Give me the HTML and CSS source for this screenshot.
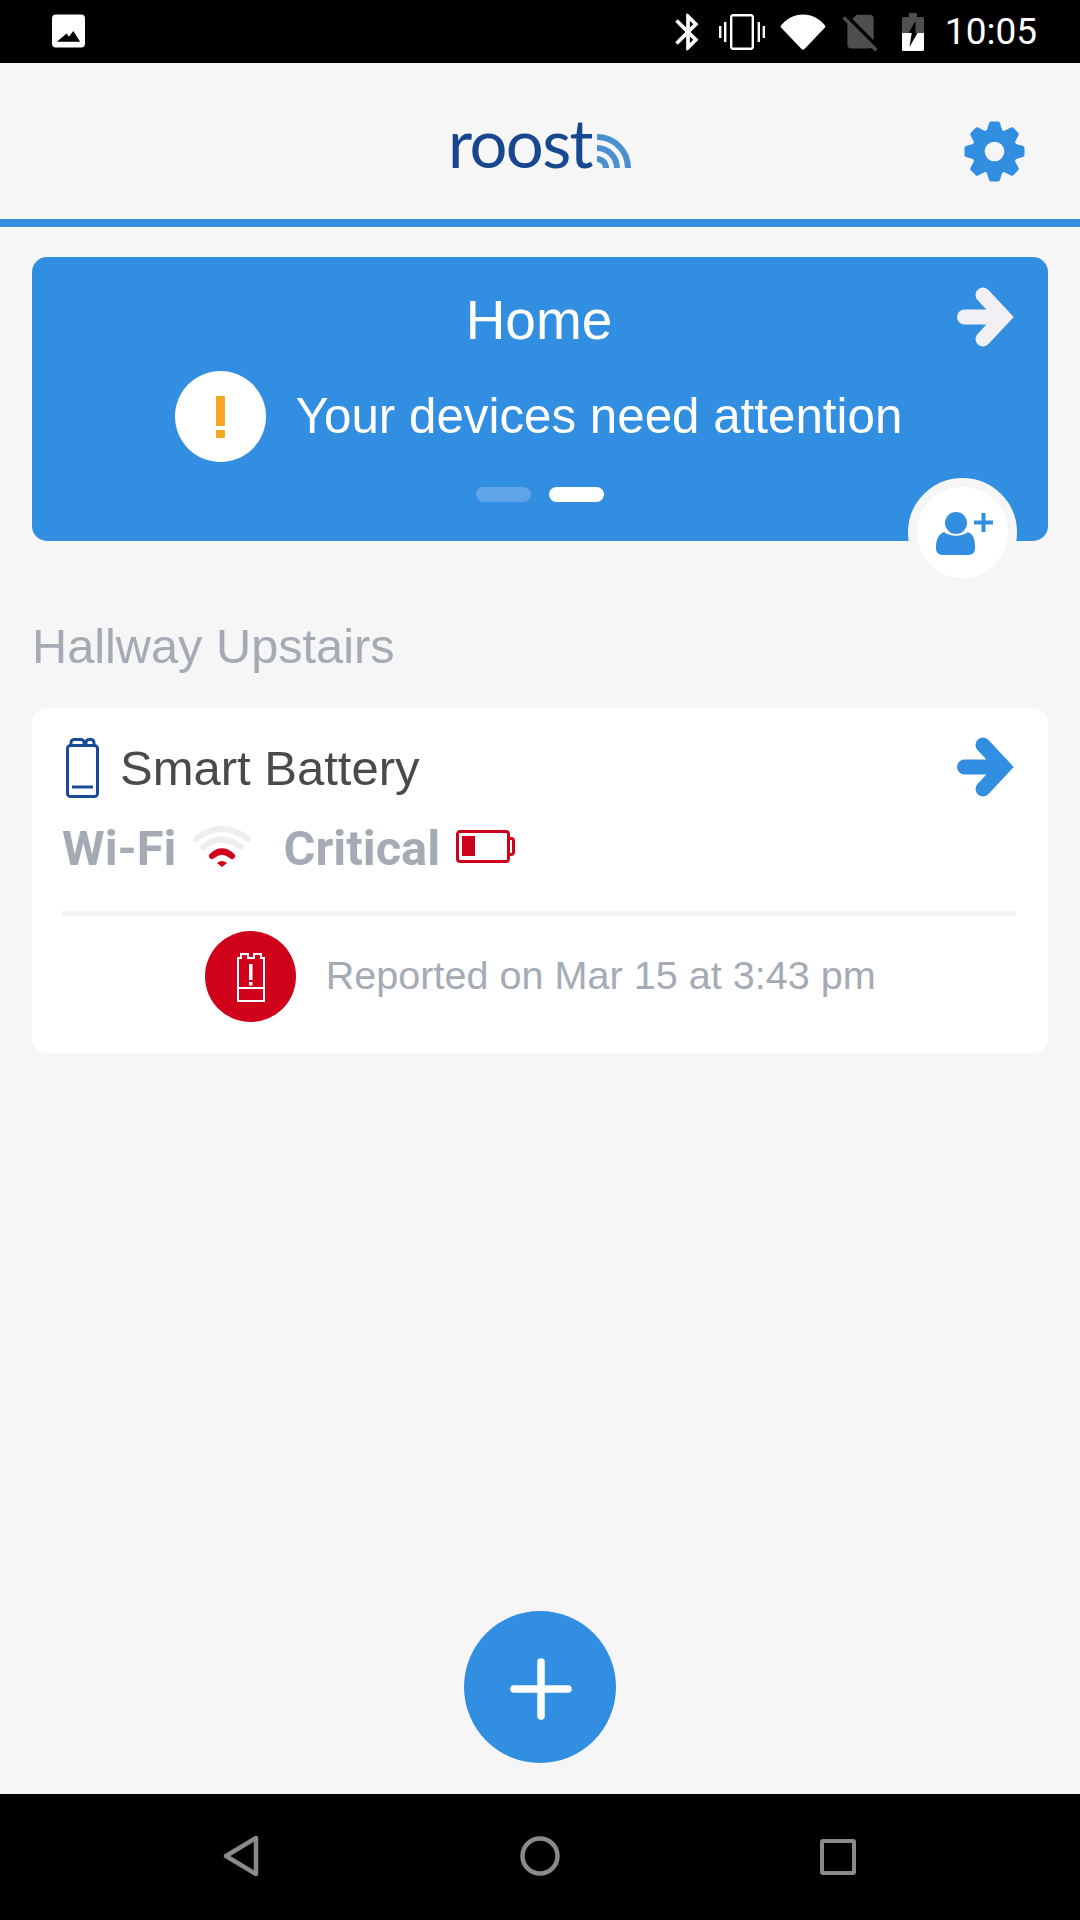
FILE: index.html
```html
<!DOCTYPE html>
<html lang="en">
<head>
<meta charset="utf-8">
<title>Roost</title>
<link rel="stylesheet" href="styles.css">
</head>
<body>
<div class="screen">
  <div class="statusbar">
    <svg class="st-image" viewBox="0 0 34 34"><path fill="#fff" fill-rule="evenodd" d="M4 0h26a4 4 0 0 1 4 4v26a4 4 0 0 1-4 4H4a4 4 0 0 1-4-4V4a4 4 0 0 1 4-4zM5 28h24l-7-11-4.500 6-2.500-3.500z"/></svg>
    <div class="st-right">
      <svg class="st-bt" viewBox="0 0 24 24"><path fill="#fff" d="M17.710 7.710L12 2h-1v7.590L6.410 5 5 6.410 10.590 12 5 17.590 6.410 19 11 14.410V22h1l5.710-5.710-4.300-4.290 4.300-4.290zM13 5.830l1.880 1.880L13 9.590V5.830zm1.880 10.460L13 18.170v-3.760l1.880 1.880z"/></svg>
      <svg class="st-vib" viewBox="0 0 24 24"><path fill="#fff" d="M.5 15h1.200v-6H.5v6zm2.500 2h1.200V7H3v10zm19.300-8v6h1.200V9h-1.200zM19.800 17H21V7h-1.200v10zM16.500 3h-9C6.670 3 6 3.670 6 4.500v15c0 .83.67 1.500 1.500 1.500h9c.83 0 1.500-.67 1.500-1.500v-15c0-.83-.67-1.500-1.500-1.500zM16.800 19.800H7.200V4.200h9.600v15.600z"/></svg>
      <svg class="st-wifi" viewBox="0 0 46 36"><path fill="#fff" d="M1 11.500Q0.200 12.600 1 13.500L21.500 35Q23 36.300 24.500 35L45 13.500Q45.800 12.600 45 11.500C40 5 32 .5 23 .5S6 5 1 11.500z"/></svg>
      <svg class="st-sim" viewBox="0 0 24 24"><path fill="#4f4f4f" d="M18.990 5c0-1.100-.89-2-1.990-2h-7L7.660 5.340 19 16.680 18.990 5zM3.650 3.880L2.380 5.150 5 7.770V19c0 1.100.9 2 2 2h10.010c.35 0 .67-.1.96-.26l1.880 1.880 1.270-1.270L3.650 3.880z"/></svg>
      <svg class="st-batt" viewBox="0 0 22 38"><path fill="#4f4f4f" d="M7 0h8v4h5.500a1.500 1.500 0 0 1 1.500 1.500V20H0V5.500A1.500 1.500 0 0 1 1.500 4H7z"/><path fill="#fff" d="M0 20h22v16.500a1.500 1.500 0 0 1-1.500 1.500H1.500A1.500 1.500 0 0 1 0 36.500z"/><path fill="#000" d="M13.500 8L6.500 20h7z"/><path fill="#000" d="M6.500 20h3.200L7.500 34l8-14z"/></svg>
      <span class="st-time">10:05</span>
    </div>
  </div>

  <header class="appbar">
    <svg class="logo" viewBox="0 0 190 90">
      <text class="logo-word" x="0" y="68">roost</text>
      <g fill="none" stroke="#4a8fd0" stroke-width="6">
        <path d="M149 37A31 31 0 0 1 180 68"/>
        <path d="M149 48A20 20 0 0 1 169 68"/>
        <path d="M149 59A9 9 0 0 1 158 68"/>
      </g>
    </svg>
    <svg class="gear" viewBox="-31 -31 62 62">
      <defs><path id="tooth" d="M-8-21L-5.500-29Q-5-30.500-3.500-30.500H3.500Q5-30.500 5.500-29L8-21z"/></defs>
      <g fill="#328ee0">
        <use href="#tooth"/><use href="#tooth" transform="rotate(45)"/><use href="#tooth" transform="rotate(90)"/><use href="#tooth" transform="rotate(135)"/><use href="#tooth" transform="rotate(180)"/><use href="#tooth" transform="rotate(225)"/><use href="#tooth" transform="rotate(270)"/><use href="#tooth" transform="rotate(315)"/>
      </g>
      <circle r="16.500" fill="none" stroke="#328ee0" stroke-width="13"/>
    </svg>
  </header>

  <main class="content">
    <section class="hero">
      <h1 class="hero-title">Home</h1>
      <svg class="arrow hero-arrow" viewBox="0 0 60 60"><path d="M9.500 30H46M28 8L48.500 30 28 52"/></svg>
      <div class="hero-alert">
        <span class="alert-badge"><span class="alert-bar"></span><span class="alert-dot"></span></span>
        <span class="hero-msg">Your devices need attention</span>
      </div>
      <div class="pager"><span class="pager-dot"></span><span class="pager-dot is-on"></span></div>
      <div class="add-user">
        <svg class="add-user-icon" viewBox="0 0 91 91">
          <circle cx="39" cy="36" r="11" fill="#328ee0"/>
          <path fill="#328ee0" d="M19 60C19 52 22 47 27 45 C33 50 45 50 51 45 C56 47 58 52 58 60V62A6 6 0 0 1 52 68H25A6 6 0 0 1 19 62z"/>
          <path d="M66.500 26V45M57 35.500H76" fill="none" stroke="#328ee0" stroke-width="4"/>
        </svg>
      </div>
    </section>

    <h2 class="room">Hallway Upstairs</h2>

    <section class="device">
      <div class="device-head">
        <svg class="device-icon" viewBox="0 0 33 60"><g fill="none" stroke="#1a4b96" stroke-width="3"><path d="M4.500 58.500H28.500A3 3 0 0 0 31.500 55.500V10.500A3 3 0 0 0 28.500 7.500H4.500A3 3 0 0 0 1.500 10.500V55.500A3 3 0 0 0 4.500 58.500z"/><path d="M5 7.500V4.500A3 3 0 0 1 8 1.500H15A3 3 0 0 1 18 4.500V7.500M20 7.500V4.500A3 3 0 0 1 23 1.500H25A3 3 0 0 1 28 4.500V7.500"/><path d="M6 49H27"/></g></svg>
        <span class="device-name">Smart Battery</span>
        <svg class="arrow device-arrow" viewBox="0 0 60 60"><path d="M9.500 30H46M28 8L48.500 30 28 52"/></svg>
      </div>
      <div class="device-meta">
        <span class="meta-label">Wi-Fi</span>
        <svg class="meta-wifi" viewBox="0 0 58 41"><g fill="none" stroke-width="6" stroke-linecap="round"><path stroke="#eeeef2" d="M3 13Q29 -7 55 13"/><path stroke="#eeeef2" d="M10 21Q29 6 48 21"/><path stroke="#d0021b" d="M19 30Q29 21 39 30"/></g><path fill="#d0021b" d="M24 37Q29 33 34 37L29 41z"/></svg>
        <span class="meta-label meta-critical">Critical</span>
        <svg class="meta-batt" viewBox="0 0 59 33"><path fill="none" stroke="#d0021b" stroke-width="3" d="M4 1.500H50A2.500 2.500 0 0 1 52.500 4V29A2.500 2.500 0 0 1 50 31.500H4A2.500 2.500 0 0 1 1.500 29V4A2.500 2.500 0 0 1 4 1.500z"/><path fill="none" stroke="#d0021b" stroke-width="3" d="M52.500 8.500H55A2.500 2.500 0 0 1 57.500 11V22A2.500 2.500 0 0 1 55 24.500H52.500"/><rect x="6" y="6" width="13" height="20" fill="#d0021b"/></svg>
      </div>
      <hr class="device-rule">
      <div class="device-report">
        <svg class="report-badge" viewBox="0 0 91 91">
          <circle cx="45.500" cy="45.500" r="45.500" fill="#d0021b"/>
          <g fill="none" stroke="#fff" stroke-width="2">
            <path d="M33 70V27H36V23H43V27H49V23H56V27H59V70z"/>
            <path d="M33 57H59"/>
          </g>
          <rect x="44" y="33" width="3.500" height="16" fill="#fff"/>
          <rect x="44" y="51" width="3.500" height="3.500" fill="#fff"/>
        </svg>
        <span class="report-text">Reported on Mar 15 at 3:43 pm</span>
      </div>
    </section>
  </main>

  <div class="fab-row">
    <button class="fab" type="button" aria-label="Add">
      <svg class="fab-icon" viewBox="0 0 62 62"><path d="M31 4V58M4 31H58" fill="none" stroke="#fff" stroke-width="7.500" stroke-linecap="round"/></svg>
    </button>
  </div>

  <nav class="navbar">
    <svg class="nav-back" viewBox="0 0 36 42"><path d="M33 3V39L3 21z" fill="none" stroke="#8a8a8a" stroke-width="4.500" stroke-linejoin="round"/></svg>
    <svg class="nav-home" viewBox="0 0 42 42"><circle cx="21" cy="21" r="17.500" fill="none" stroke="#8a8a8a" stroke-width="4.500"/></svg>
    <svg class="nav-recent" viewBox="0 0 36 36"><rect x="2" y="2" width="32" height="32" rx="1" fill="none" stroke="#8a8a8a" stroke-width="4"/></svg>
  </nav>
</div>
</body>
</html>
```

FILE: styles.css
```css
* { box-sizing: border-box; }
html, body { margin: 0; padding: 0; }
body { background: #f6f6f6; font-family: "Liberation Sans", Arial, sans-serif; }
svg { display: block; flex: none; }

.screen { width: 1080px; height: 1920px; display: flex; flex-direction: column; overflow: hidden; background: #f6f6f6; }

.statusbar { height: 63px; flex: none; background: #000; display: flex; align-items: center; justify-content: space-between; padding: 0 43px 0 52px; }
.st-image { width: 33px; height: 34px; margin-bottom: 1px; }
.st-right { display: flex; align-items: center; }
.st-bt { width: 44px; height: 44px; }
.st-vib { width: 48px; height: 48px; margin-left: 8px; }
.st-wifi { width: 46px; height: 36px; margin-left: 14px; }
.st-sim { width: 45px; height: 45px; margin-left: 12px; }
.st-batt { width: 22px; height: 38px; margin-left: 19px; }
.st-time { margin-left: 21px; color: #fff; font: 400 37px/40px Roboto, sans-serif; }

.appbar { height: 164px; flex: none; border-bottom: 8px solid #328ee0; display: flex; align-items: center; justify-content: center; position: relative; }
.logo { width: 190px; height: 90px; margin: 8px 0 0 6px; }
.logo-word { font-family: Lato, sans-serif; font-weight: 400; font-size: 67px; letter-spacing: -1.600px; fill: #17478f; }
.gear { position: absolute; left: 964px; top: 58px; width: 61px; height: 61px; }

.content { padding: 30px 32px 0; flex: 1; }

.hero { position: relative; height: 284px; background: #328ee0; border-radius: 15px; padding-top: 30px; color: #fff; display: flex; flex-direction: column; align-items: center; }
.hero-title { margin: 0 2px 0 0; font-weight: 400; font-size: 55px; line-height: 66px; }
.arrow { width: 60px; height: 60px; }
.arrow path { fill: none; stroke-width: 15; stroke-linecap: round; stroke-linejoin: miter; }
.hero-arrow { position: absolute; right: 33px; top: 30px; }
.hero-arrow path { stroke: #f0f0f5; }
.hero-alert { display: flex; align-items: center; gap: 30px; margin-top: 18px; margin-right: 3px; }
.alert-badge { width: 91px; height: 91px; border-radius: 50%; background: #fff; display: flex; flex-direction: column; align-items: center; justify-content: center; gap: 4px; }
.alert-bar { width: 9px; height: 30px; background: #f5a623; border-radius: 1px; }
.alert-dot { width: 9px; height: 8px; background: #f5a623; border-radius: 1px; }
.hero-msg { font-size: 49.300px; line-height: 56px; margin-bottom: 2px; }
.pager { display: flex; gap: 18px; margin-top: 25px; }
.pager-dot { width: 55px; height: 15px; border-radius: 8px; background: #5fa4e8; }
.pager-dot.is-on { background: #fff; }
.add-user { position: absolute; right: 31px; top: 221px; width: 109px; height: 109px; border-radius: 50%; background: #fff; border: 9px solid #f6f6f6; }
.add-user-icon { width: 91px; height: 91px; }

.room { margin: 74px 0 0; height: 92px; font-weight: 400; font-size: 48.700px; line-height: 60px; color: #a4abb5; padding-top: 1px; }

.device { position: relative; background: #fff; border-radius: 15px; height: 345px; padding: 30px 32px 0 30px; margin-top: 1px; }
.device-head { display: flex; align-items: center; height: 60px; padding-left: 4px; }
.device-icon { width: 33px; height: 60px; }
.device-name { margin-left: 21px; font-size: 49px; line-height: 60px; color: #4a4a4a; }
.device-arrow { position: absolute; right: 33px; top: 29px; }
.device-arrow path { stroke: #328ee0; }
.device-meta { display: flex; align-items: center; height: 41px; margin-top: 28px; }
.meta-label { font: 700 48.800px/41px Roboto, sans-serif; color: #a4abb5; padding-top: 4px; }
.meta-wifi { width: 58px; height: 41px; margin-left: 16px; }
.meta-critical { margin-left: 33px; }
.meta-batt { width: 59px; height: 33px; margin-left: 16px; }
.device-rule { height: 5px; border: 0; margin: 44px 0 0; background: #f4f4f6; }
.device-report { display: flex; align-items: center; justify-content: center; gap: 29.500px; margin-top: 15px; padding-left: 3px; }
.report-badge { width: 91px; height: 91px; }
.report-text { font-size: 39.600px; line-height: 46px; color: #a4abb5; margin-bottom: 4px; }

.fab-row { flex: none; display: flex; justify-content: center; padding-bottom: 31px; }
.fab { width: 152px; height: 152px; border: 0; padding: 0; border-radius: 50%; background: #328ee0; display: flex; align-items: center; justify-content: center; }
.fab-icon { width: 62px; height: 62px; margin: 4px 0 0 2px; }

.navbar { height: 126px; flex: none; background: #000; display: flex; align-items: center; padding: 0 0 2px 223px; }
.nav-back { width: 36px; height: 42px; }
.nav-home { width: 42px; height: 42px; margin-left: 260px; }
.nav-recent { width: 36px; height: 36px; margin-left: 259px; margin-top: 2px; }
```
